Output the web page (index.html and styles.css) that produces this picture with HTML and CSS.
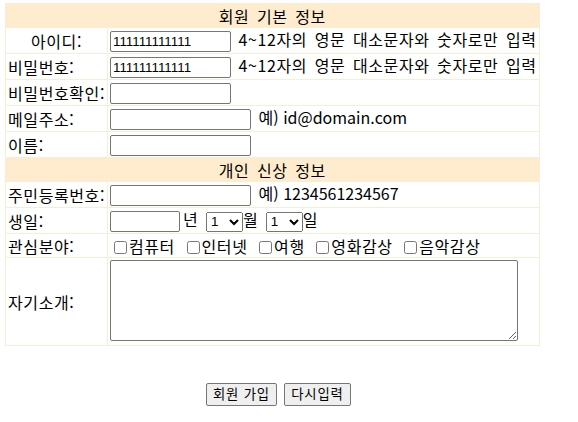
FILE: index.html
```html
<!DOCTYPE html>
<html lang="ko">
<head>
  <meta charset="UTF-8" />
  <meta name="viewport" content="width=device-width, initial-scale=1.0"/>
  <title>회원 가입</title>
  <link rel="stylesheet" href="styles.css">
</head>
<body>

<form id="joinForm">
  <table class="join-table">
    <tr class="section">
      <td colspan="2">회원 기본 정보</td>
    </tr>
    <tr>
      <td class="label center">아이디:</td>
      <td><input type="text" name="id" class="short" value="111111111111" /> 4~12자의 영문 대소문자와 숫자로만 입력</td>
    </tr>
    <tr>
      <td class="label">비밀번호:</td>
      <td><input type="text" name="pw" class="short" value="111111111111" /> 4~12자의 영문 대소문자와 숫자로만 입력</td>
    </tr>
    <tr>
      <td class="label">비밀번호확인:</td>
      <td><input type="password" name="pw2" class="short" /></td>
    </tr>
    <tr>
      <td class="label">메일주소:</td>
      <td><input type="text" name="email" class="long" /> <span class="example">예) id@domain.com</span></td>
    </tr>
    <tr>
      <td class="label">이름:</td>
      <td><input type="text" name="name" class="long" /></td>
    </tr>
    <tr class="section">
      <td colspan="2">개인 신상 정보</td>
    </tr>
    <tr>
      <td class="label">주민등록번호:</td>
      <td><input type="text" name="jumin" class="long" /> <span class="example">예) 1234561234567</span></td>
    </tr>
    <tr>
      <td class="label">생일:</td>
      <td><input type="text" name="year" class="year" />년 <select name="month"><option>1</option><option>2</option><option>3</option></select>월 <select name="day"><option>1</option><option>2</option><option>3</option></select>일</td>
    </tr>
    <tr class="hobby-row">
      <td class="label">관심분야:</td>
      <td class="hobbies">
        <label><input type="checkbox" name="hobby" />컴퓨터</label>
        <label><input type="checkbox" name="hobby" />인터넷</label>
        <label><input type="checkbox" name="hobby" />여행</label>
        <label><input type="checkbox" name="hobby" />영화감상</label>
        <label><input type="checkbox" name="hobby" />음악감상</label>
      </td>
    </tr>
    <tr class="intro">
      <td class="label">자기소개:</td>
      <td><textarea name="intro"></textarea></td>
    </tr>
  </table>

  <div class="buttons">
    <button type="submit">회원 가입</button>
    <button type="reset">다시입력</button>
  </div>
</form>

</body>
</html>
```

FILE: styles.css
```css
body {
  margin: 3px 5px;
  font-family: "Noto Sans CJK KR", "Noto Sans", sans-serif;
  font-size: 16px;
  color: #000;
  background-color: #fff;
}

.join-table {
  width: 534px;
  border-collapse: collapse;
  letter-spacing: 0.6px;
  word-spacing: 2.5px;
}

.join-table td {
  border: 1px solid #fdecd4;
  padding: 0 2px;
  height: 25px;
  line-height: 20px;
  white-space: nowrap;
}

.join-table .section td {
  background-color: #ffebcd;
  text-align: center;
  height: 23px;
}

.join-table .hobby-row td {
  height: 23px;
}

.join-table td.label {
  width: 98px;
}

.join-table td.center {
  text-align: center;
}

.example {
  letter-spacing: 0;
  word-spacing: 0;
}

input[type="text"],
input[type="password"] {
  box-sizing: border-box;
  height: 21px;
  padding: 1px 2px;
  margin: 0;
  border: 1px solid #767676;
  border-radius: 2px;
  font-family: "Liberation Sans", Arial, sans-serif;
  font-size: 13.33px;
  letter-spacing: 0;
  vertical-align: middle;
}

input.short {
  width: 121px;
}

input.long {
  width: 141px;
}

input.year {
  width: 70px;
  margin-right: 3px;
}

select {
  box-sizing: border-box;
  width: 37px;
  height: 20px;
  margin: 0;
  font-family: "Liberation Sans", Arial, sans-serif;
  font-size: 13.33px;
  letter-spacing: 0;
  vertical-align: middle;
}

.hobbies input {
  margin: 0 2px 0 4px;
  vertical-align: -1px;
}

.intro td {
  height: 87px;
}

textarea {
  box-sizing: border-box;
  width: 408px;
  height: 81px;
  margin: 2px 0 4px;
  display: block;
  border: 1px solid #767676;
  border-radius: 2px;
  font-size: 13.33px;
}

.buttons {
  padding-top: 34px;
  padding-left: 201px;
}

button {
  height: 23px;
  padding: 1px 6px;
  margin: 0 3px 0 0;
  border: 1px solid #767676;
  border-radius: 2px;
  background-color: #efefef;
  font-family: "Noto Sans CJK KR", sans-serif;
  font-size: 13.33px;
  letter-spacing: 0.8px;
  line-height: 18px;
}
```
